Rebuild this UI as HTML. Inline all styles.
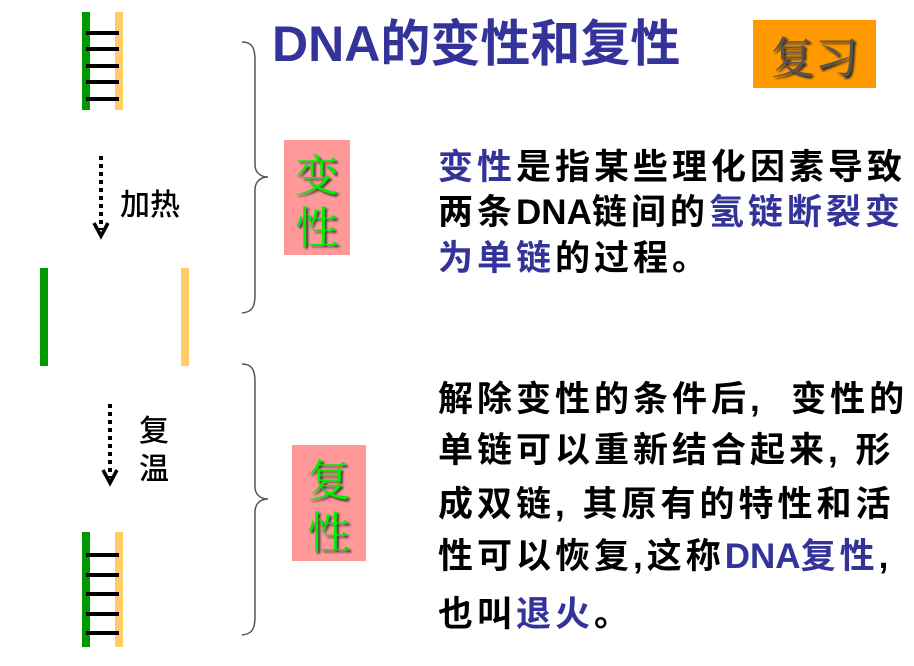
<!DOCTYPE html>
<html><head><meta charset="utf-8"><style>
body{margin:0;width:914px;height:666px;background:#fff;position:relative;overflow:hidden;font-family:"Liberation Sans","Noto Sans CJK SC",sans-serif}
.a{position:absolute}
.l{position:absolute;left:438px;font-size:35px;letter-spacing:4px;white-space:nowrap;line-height:40px;color:#000;font-weight:bold}
.b{color:#333399}
.d{letter-spacing:0;font-family:"Liberation Sans Narrow","Liberation Sans",sans-serif}
.r{position:absolute;height:4px;background:#000;left:86px;width:33px}
.box{position:absolute;background:#ff9999;color:#00ee00;font-family:"Noto Serif CJK SC",serif;font-size:44px;line-height:52px;text-align:center;text-shadow:2px 2px 2px #333}
</style></head><body>
<div class="a" style="left:82px;top:12px;width:8px;height:98px;background:#009900"></div>
<div class="a" style="left:115px;top:12px;width:8px;height:98px;background:#ffcc66"></div>
<div class="r" style="top:31px"></div><div class="r" style="top:47px"></div><div class="r" style="top:64px"></div><div class="r" style="top:80px"></div><div class="r" style="top:97px"></div>
<div class="a" style="left:40px;top:268px;width:8px;height:98px;background:#009900"></div>
<div class="a" style="left:181px;top:268px;width:8px;height:98px;background:#ffcc66"></div>
<div class="a" style="left:82px;top:532px;width:8px;height:115px;background:#009900"></div>
<div class="a" style="left:115px;top:532px;width:8px;height:115px;background:#ffcc66"></div>
<div class="r" style="top:553px"></div><div class="r" style="top:573px"></div><div class="r" style="top:592px"></div><div class="r" style="top:612px"></div><div class="r" style="top:631px"></div>
<svg class="a" style="left:0;top:0" width="914" height="666">
<line x1="101" y1="156" x2="101" y2="230" stroke="#000" stroke-width="4" stroke-dasharray="4,4"/>
<polyline points="94,223 101,236 108,223" fill="none" stroke="#000" stroke-width="3.5"/>
<line x1="110" y1="404" x2="110" y2="478" stroke="#000" stroke-width="4" stroke-dasharray="4,4"/>
<polyline points="103,470 110,483 117,470" fill="none" stroke="#000" stroke-width="3.5"/>
<path d="M242,42 C252,42 255,48 255,60 L255,165 C255,172 260,177 268,177 C260,177 255,182 255,190 L255,295 C255,307 252,312 242,313" fill="none" stroke="#555" stroke-width="1.5"/>
<path d="M242,364 C252,364 255,370 255,382 L255,487 C255,494 260,499 268,499 C260,499 255,504 255,512 L255,617 C255,629 252,634 242,635" fill="none" stroke="#555" stroke-width="1.5"/>
</svg>
<div class="a" style="left:120px;top:188px;font-size:30px;line-height:36px;font-weight:500">加热</div>
<div class="a" style="left:139px;top:413px;font-size:30px;line-height:38px;font-weight:500">复<br>温</div>
<div class="box" style="left:284px;top:140px;width:66px;height:115px;padding-top:6px;box-sizing:border-box">变<br>性</div>
<div class="box" style="left:292px;top:445px;width:74px;height:116px;padding-top:6px;box-sizing:border-box">复<br>性</div>
<div class="a" style="left:272px;top:14px;font-size:50px;font-weight:bold;color:#333399;line-height:60px"><span class="d">DNA</span>的变性和复性</div>
<div class="a" style="left:753px;top:20px;width:123px;height:68px;background:#ff9900;color:#555;font-family:'Noto Serif CJK SC',serif;font-size:44px;line-height:68px;text-align:center;text-shadow:2px 2px 2px #222">复习</div>
<div class="l" style="top:148px"><span class="b">变性</span>是指某些理化因素导致</div>
<div class="l" style="top:193px">两条<span class="d">DNA</span>链间的<span class="b">氢链断裂变</span></div>
<div class="l" style="top:239px"><span class="b">为单链</span>的过程。</div>
<div class="l" style="top:380px">解除变性的条件后,&nbsp; 变性的</div>
<div class="l" style="top:431px">单链可以重新结合起来, 形</div>
<div class="l" style="top:485px">成双链, 其原有的特性和活</div>
<div class="l" style="top:537px">性可以恢复,这称<span class="b"><span class="d">DNA</span>复性</span>,</div>
<div class="l" style="top:595px">也叫<span class="b">退火</span>。</div>
</body></html>
